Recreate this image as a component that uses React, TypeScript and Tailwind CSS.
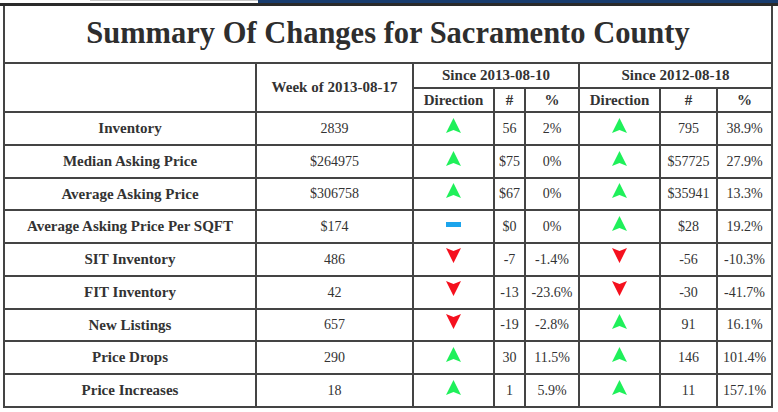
import React from "react";

type Dir = "up" | "down" | "flat";
type Row = [string, string, Dir, string, string, Dir, string, string];

const rows: Row[] = [
  ["Inventory", "2839", "up", "56", "2%", "up", "795", "38.9%"],
  ["Median Asking Price", "$264975", "up", "$75", "0%", "up", "$57725", "27.9%"],
  ["Average Asking Price", "$306758", "up", "$67", "0%", "up", "$35941", "13.3%"],
  ["Average Asking Price Per SQFT", "$174", "flat", "$0", "0%", "up", "$28", "19.2%"],
  ["SIT Inventory", "486", "down", "-7", "-1.4%", "down", "-56", "-10.3%"],
  ["FIT Inventory", "42", "down", "-13", "-23.6%", "down", "-30", "-41.7%"],
  ["New Listings", "657", "down", "-19", "-2.8%", "up", "91", "16.1%"],
  ["Price Drops", "290", "up", "30", "11.5%", "up", "146", "101.4%"],
  ["Price Increases", "18", "up", "1", "5.9%", "up", "11", "157.1%"],
];

function Arrow({ dir }: { dir: Dir }) {
  if (dir === "flat") {
    return <div className="mx-auto mb-[4px] h-[5px] w-[15px] bg-[#1ca4ec]" />;
  }
  if (dir === "up") {
    return (
      <svg width="15" height="15" viewBox="0 0 15 15" className="mx-auto mb-[6px] block">
        <path d="M7.5 0 L15 15 L7.5 12 L0 15 Z" fill="#1ff05a" />
      </svg>
    );
  }
  return (
    <svg width="15" height="15" viewBox="0 0 15 15" className="mx-auto mb-[7px] block">
      <path d="M7.5 15 L15 0 L7.5 3 L0 0 Z" fill="#f5101e" />
    </svg>
  );
}

const cell = "border-2 border-[#444] text-center align-middle p-0";

export default function App() {
  return (
    <div className="w-[778px] h-[412px] bg-white overflow-hidden font-['Liberation_Serif',serif] text-[#333]">
      <div className="flex h-[3px]">
        <div className="w-[90px] bg-white" />
        <div className="w-[168px] bg-white border-t border-[#c8c8c8]" />
        <div className="flex-1 bg-[#183c6e]" />
      </div>
      <div className="h-[3px] bg-[#2a2a2a]" />
      <table className="ml-[3px] w-[768px] table-fixed border-collapse">
        <colgroup>
          <col className="w-[252px]" />
          <col className="w-[157px]" />
          <col className="w-[81px]" />
          <col className="w-[31px]" />
          <col className="w-[54px]" />
          <col className="w-[81px]" />
          <col className="w-[57px]" />
          <col className="w-[55px]" />
        </colgroup>
        <tbody>
          <tr className="h-[57px]">
            <td colSpan={8} className={cell + " border-t-0 text-[30.5px] font-bold text-[#2e2e2e]"}>
              Summary Of Changes for Sacramento County
            </td>
          </tr>
          <tr className="h-[24px] text-[15px] font-bold">
            <td rowSpan={2} className={cell}></td>
            <td rowSpan={2} className={cell}>Week of 2013-08-17</td>
            <td colSpan={3} className={cell}>Since 2013-08-10</td>
            <td colSpan={3} className={cell}>Since 2012-08-18</td>
          </tr>
          <tr className="h-[24px] text-[15px] font-bold">
            <td className={cell}>Direction</td>
            <td className={cell}>#</td>
            <td className={cell}>%</td>
            <td className={cell}>Direction</td>
            <td className={cell}>#</td>
            <td className={cell}>%</td>
          </tr>
          {rows.map((r) => (
            <tr key={r[0]} className="h-[32.75px] text-[14px]">
              <td className={cell + " text-[15px] font-bold"}>{r[0]}</td>
              <td className={cell}>{r[1]}</td>
              <td className={cell}>
                <Arrow dir={r[2]} />
              </td>
              <td className={cell}>{r[3]}</td>
              <td className={cell}>{r[4]}</td>
              <td className={cell}>
                <Arrow dir={r[5]} />
              </td>
              <td className={cell}>{r[6]}</td>
              <td className={cell}>{r[7]}</td>
            </tr>
          ))}
        </tbody>
      </table>
    </div>
  );
}
